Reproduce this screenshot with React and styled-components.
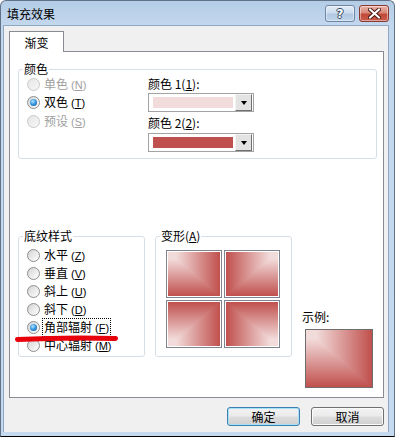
import React from "react";
import styled, { createGlobalStyle } from "styled-components";

const Global = createGlobalStyle`
  html, body { margin: 0; padding: 0; background: #ffffff; }
  body { font-family: "Liberation Sans", "Noto Sans CJK SC", sans-serif; font-size: 12px; color: #000; }
`;

const LIGHT = "#F2DCDB";
const DARK = "#C0504D";

const Window = styled.div`
  width: 395px;
  height: 437px;
  box-sizing: border-box;
  border: 1px solid #5f7288;
  border-bottom-color: #000;
  border-radius: 6px 6px 0 0;
  background: linear-gradient(#b4cce6 0px, #c3d7ed 24px, #c6daef 100%);
  display: flex;
  flex-direction: column;
  overflow: hidden;
`;

const TitleBar = styled.div`
  height: 24px;
  flex: none;
  display: flex;
  align-items: center;
  padding: 0 5px 0 6px;
`;

const Title = styled.div`
  flex: 1;
  font-family: "Noto Sans CJK SC", sans-serif;
  font-size: 12px;
  line-height: 14px;
  padding-top: 2px;
  color: #000;
`;

const CaptionButtons = styled.div`
  display: flex;
  gap: 4px;
  align-self: flex-start;
  margin-top: 4px;
`;

const CaptionButton = styled.div`
  width: 30px;
  height: 17px;
  box-sizing: border-box;
  border-radius: 3px;
  border: 1px solid ${(p) => (p.$close ? "#8a3a30" : "#6c86a6")};
  background: ${(p) =>
    p.$close
      ? "linear-gradient(#e9b3a8 0%, #d88878 45%, #c2493a 55%, #c95c4b 100%)"
      : "linear-gradient(#e3ecf6 0%, #ccdcee 45%, #b2c8e2 55%, #bfd3ea 100%)"};
  box-shadow: inset 0 0 0 1px rgba(255, 255, 255, 0.45);
  display: flex;
  align-items: center;
  justify-content: center;
`;

const HelpGlyph = styled.span`
  font-family: "DejaVu Sans", sans-serif;
  font-weight: bold;
  font-size: 12px;
  line-height: 12px;
  color: #ffffff;
  text-shadow: 1px 0 0 #33465e, -1px 0 0 #33465e, 0 1px 0 #33465e, 0 -1px 0 #33465e;
`;

const Client = styled.div`
  flex: 1;
  margin: 0 5px 4px 2px;
  background: #f0f0f0;
  border: 1px solid #8ea8c4;
  border-bottom: none;
  padding: 5px 4px 0 5px;
  display: flex;
  flex-direction: column;
`;

const TabStrip = styled.div`
  display: flex;
  position: relative;
  z-index: 1;
  margin-bottom: -1px;
`;

const Tab = styled.div`
  width: 55px;
  height: 21px;
  box-sizing: border-box;
  border: 1px solid #898c95;
  border-bottom: none;
  background: #ffffff;
  font-family: "Noto Sans CJK SC", sans-serif;
  font-size: 12px;
  line-height: 20px;
  text-align: center;
  padding-top: 1px;
`;

const Panel = styled.div`
  position: relative;
  height: 347px;
  box-sizing: border-box;
  border: 1px solid #898c95;
  background: #ffffff;
  display: flex;
  flex-direction: column;
`;

const Group = styled.fieldset`
  margin: ${(p) => p.$margin || "0"};
  width: ${(p) => p.$width || "auto"};
  box-sizing: border-box;
  border: 1px solid #d5dfe5;
  border-radius: 3px;
  padding: ${(p) => p.$padding || "0 4px 0 4px"};
  min-width: 0;
`;

const Legend = styled.legend`
  padding: 0 1px;
  font-family: "Noto Sans CJK SC", sans-serif;
  font-size: 12px;
  line-height: 14px;
  height: 14px;
`;

const ColorBody = styled.div`
  display: flex;
  margin-top: -1px;
  padding-left: 4px;
`;

const RadioList = styled.div`
  display: flex;
  flex-direction: column;
  width: ${(p) => p.$width || "auto"};
  padding-top: ${(p) => p.$top || "0"};
  padding-left: ${(p) => p.$left || "0"};
`;

const RadioRow = styled.div`
  display: flex;
  align-items: center;
  gap: 3px;
  height: ${(p) => p.$h || "18px"};
  color: ${(p) => (p.$disabled ? "#a0a0a0" : "#000")};
  white-space: nowrap;
`;

const RadioCircle = styled.span`
  flex: none;
  width: 13px;
  height: 13px;
  box-sizing: border-box;
  border-radius: 50%;
  border: 1px solid ${(p) => (p.$disabled ? "#c9c9c9" : "#8c8e90")};
  background: ${(p) =>
    p.$disabled
      ? "linear-gradient(135deg, #e6e6e6, #f7f7f7)"
      : "linear-gradient(135deg, #d3d3d3 0%, #ececec 55%, #ffffff 100%)"};
  display: flex;
  align-items: center;
  justify-content: center;
  &::after {
    content: "";
    display: ${(p) => (p.$checked ? "block" : "none")};
    width: 7px;
    height: 7px;
    border-radius: 50%;
    background: radial-gradient(circle at 40% 35%, #b6e4ff 0%, #3a9be2 45%, #0c4a8c 100%);
  }
`;

const RadioText = styled.span`
  font-family: "Noto Sans CJK SC", sans-serif;
  font-size: 12px;
  line-height: 15px;
  box-sizing: border-box;
  border: 1px ${(p) => (p.$focus ? "dotted #000" : "solid transparent")};
  padding: 0 1px;
  margin-left: -1px;
`;

const Key = styled.span`
  font-family: "Liberation Sans", sans-serif;
  font-size: 11px;
  margin-left: 3px;
  & u { text-decoration: underline; }
`;

const Pickers = styled.div`
  display: flex;
  flex-direction: column;
`;

const PickerLabel = styled.div`
  font-family: "Noto Sans CJK SC", sans-serif;
  font-size: 12px;
  height: 17px;
  line-height: 17px;
  margin-top: ${(p) => p.$top || "0"};
`;

const Combo = styled.div`
  width: 106px;
  height: 19px;
  box-sizing: border-box;
  margin-top: ${(p) => p.$top || "0"};
  border: 1px solid #a3a3a3;
  background: #ffffff;
  display: flex;
  align-items: center;
  padding: 0 1px 0 4px;
`;

const Swatch = styled.div`
  width: 80px;
  height: 11px;
  background: ${(p) => p.$color};
`;

const DropButton = styled.div`
  margin-left: auto;
  width: 17px;
  height: 17px;
  box-sizing: border-box;
  background: #e3e3e3;
  border: 1px solid;
  border-color: #f4f4f4 #707070 #707070 #f4f4f4;
  display: flex;
  align-items: center;
  justify-content: center;
  &::after {
    content: "";
    width: 0;
    height: 0;
    margin-top: 1px;
    border-left: 3.5px solid transparent;
    border-right: 3.5px solid transparent;
    border-top: 4px solid #000;
  }
`;

const BottomRow = styled.div`
  display: flex;
  align-items: flex-start;
  margin: 70px 0 0 8px;
`;

const TileGrid = styled.div`
  display: grid;
  grid-template-columns: 56px 56px;
  grid-auto-rows: 48px;
  gap: 2px;
  margin: 7px 0 8px 6px;
`;

const Tile = styled.div`
  box-sizing: border-box;
  border: 1px solid #7f838b;
  background: #fff;
  padding: 1px;
  & svg { display: block; width: 100%; height: 100%; }
`;

const SampleCol = styled.div`
  display: flex;
  flex-direction: column;
  margin: 81px 0 0 10px;
`;

const SampleLabel = styled.div`
  font-family: "Noto Sans CJK SC", sans-serif;
  font-size: 12px;
  line-height: 14px;
`;

const SampleBox = styled.div`
  width: 68px;
  height: 59px;
  box-sizing: border-box;
  margin: 5px 0 0 3px;
  border: 1px solid #6e6e6e;
  & svg { display: block; width: 100%; height: 100%; }
`;

const RedMark = styled.svg`
  position: absolute;
  left: 3px;
  top: 282px;
  width: 110px;
  height: 10px;
  overflow: visible;
  pointer-events: none;
`;

const ButtonRow = styled.div`
  display: flex;
  justify-content: flex-end;
  gap: 11px;
  margin-top: 9px;
`;

const DlgButton = styled.div`
  width: 73px;
  height: 19px;
  box-sizing: border-box;
  border-radius: 3px;
  border: 1px solid ${(p) => (p.$default ? "#3c7fb1" : "#707070")};
  box-shadow: inset 0 0 0 1px ${(p) => (p.$default ? "#a6e1f8" : "#fbfbfb")};
  background: linear-gradient(#f2f2f2 0%, #ebebeb 48%, #dddddd 52%, #cfcfcf 100%);
  font-family: "Noto Sans CJK SC", sans-serif;
  font-size: 12px;
  line-height: 17px;
  text-align: center;
`;

let gid = 0;
function CornerGradient({ corner }) {
  const id = React.useMemo(() => `cg${gid++}`, []);
  const flipX = corner === "tr" || corner === "br";
  const flipY = corner === "bl" || corner === "br";
  const t = `translate(${flipX ? 100 : 0} ${flipY ? 100 : 0}) scale(${flipX ? -1 : 1} ${flipY ? -1 : 1})`;
  return (
    <svg viewBox="0 0 100 100" preserveAspectRatio="none" shapeRendering="crispEdges">
      <defs>
        <linearGradient id={`${id}h`} x1="0" y1="0" x2="1" y2="0">
          <stop offset="0" stopColor={LIGHT} />
          <stop offset="0.15" stopColor={LIGHT} />
          <stop offset="1" stopColor={DARK} />
        </linearGradient>
        <linearGradient id={`${id}v`} x1="0" y1="0" x2="0" y2="1">
          <stop offset="0" stopColor={LIGHT} />
          <stop offset="0.15" stopColor={LIGHT} />
          <stop offset="1" stopColor={DARK} />
        </linearGradient>
      </defs>
      <g transform={t}>
        <rect x="0" y="0" width="100" height="100" fill={`url(#${id}h)`} />
        <polygon points="0,0 0,100 100,100" fill={`url(#${id}v)`} />
      </g>
    </svg>
  );
}

function Radio({ label, k, checked, disabled, focus, h }) {
  return (
    <RadioRow $disabled={disabled} $h={h}>
      <RadioCircle $checked={checked} $disabled={disabled} />
      <RadioText $focus={focus}>
        {label}
        <Key>
          (<u>{k}</u>)
        </Key>
      </RadioText>
    </RadioRow>
  );
}

export default function App() {
  return (
    <>
      <Global />
      <Window>
        <TitleBar>
          <Title>填充效果</Title>
          <CaptionButtons>
            <CaptionButton>
              <HelpGlyph>?</HelpGlyph>
            </CaptionButton>
            <CaptionButton $close>
              <svg width="13" height="11" viewBox="0 0 13 11">
                <path
                  d="M2 1.5 L11 9.5 M11 1.5 L2 9.5"
                  stroke="#4a1a14"
                  strokeWidth="4"
                  strokeLinecap="square"
                />
                <path
                  d="M2 1.5 L11 9.5 M11 1.5 L2 9.5"
                  stroke="#ffffff"
                  strokeWidth="2"
                  strokeLinecap="square"
                />
              </svg>
            </CaptionButton>
          </CaptionButtons>
        </TitleBar>
        <Client>
          <TabStrip>
            <Tab>渐变</Tab>
          </TabStrip>
          <Panel>
            <Group $margin="10px 6px 0 8px" $padding="0 4px 6px 4px">
              <Legend>颜色</Legend>
              <ColorBody>
                <RadioList $width="121px">
                  <Radio label="单色" k="N" disabled h="18.5px" />
                  <Radio label="双色" k="T" checked h="18.5px" />
                  <Radio label="预设" k="S" disabled h="18.5px" />
                </RadioList>
                <Pickers>
                  <PickerLabel>
                    颜色 1(<u>1</u>):
                  </PickerLabel>
                  <Combo $top="1px">
                    <Swatch $color={LIGHT} />
                    <DropButton />
                  </Combo>
                  <PickerLabel $top="2px">
                    颜色 2(<u>2</u>):
                  </PickerLabel>
                  <Combo $top="2px">
                    <Swatch $color={DARK} />
                    <DropButton />
                  </Combo>
                </Pickers>
              </ColorBody>
            </Group>
            <BottomRow>
              <Group $width="127px" $padding="0 4px 2px 4px">
                <Legend>底纹样式</Legend>
                <RadioList $top="3px" $left="4px">
                  <Radio label="水平" k="Z" />
                  <Radio label="垂直" k="V" />
                  <Radio label="斜上" k="U" />
                  <Radio label="斜下" k="D" />
                  <Radio label="角部辐射" k="F" checked focus />
                  <Radio label="中心辐射" k="M" />
                </RadioList>
              </Group>
              <Group $width="137px" $margin="0 0 0 10px" $padding="0 4px 0 4px">
                <Legend>
                  变形(<u>A</u>)
                </Legend>
                <TileGrid>
                  <Tile>
                    <CornerGradient corner="tl" />
                  </Tile>
                  <Tile>
                    <CornerGradient corner="tr" />
                  </Tile>
                  <Tile>
                    <CornerGradient corner="bl" />
                  </Tile>
                  <Tile>
                    <CornerGradient corner="br" />
                  </Tile>
                </TileGrid>
              </Group>
              <SampleCol>
                <SampleLabel>示例:</SampleLabel>
                <SampleBox>
                  <CornerGradient corner="tl" />
                </SampleBox>
              </SampleCol>
            </BottomRow>
            <RedMark viewBox="0 0 110 10">
              <path
                d="M4.5 5.5 Q 55 3 102.5 4.5"
                stroke="#e8000b"
                strokeWidth="5"
                strokeLinecap="round"
                fill="none"
              />
            </RedMark>
          </Panel>
          <ButtonRow>
            <DlgButton $default>确定</DlgButton>
            <DlgButton>取消</DlgButton>
          </ButtonRow>
        </Client>
      </Window>
    </>
  );
}
